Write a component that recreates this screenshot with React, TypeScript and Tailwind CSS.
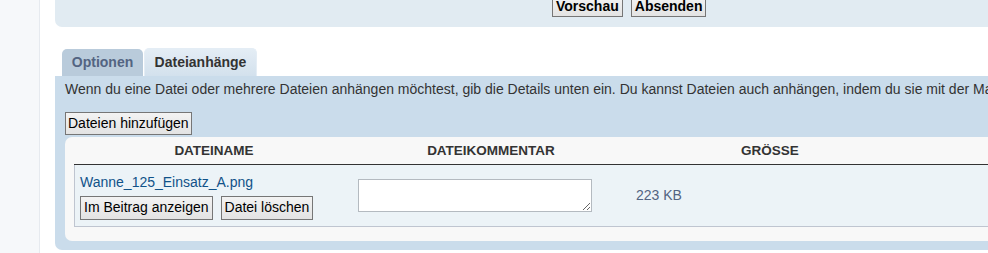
import React from "react";

const font = { fontFamily: '"Liberation Sans", Arial, sans-serif' };

function Btn({ children, bold = false, className = "" }: { children: React.ReactNode; bold?: boolean; className?: string }) {
  return (
    <button
      className={
        "shrink-0 border border-[#767676] bg-gradient-to-b from-[#f3f3f3] to-[#e3e3e3] text-[14px] leading-[19px] text-black " +
        (bold ? "font-bold " : "") +
        className
      }
    >
      {children}
    </button>
  );
}

export default function App() {
  return (
    <div className="flex h-[253px] w-[988px] overflow-hidden bg-white" style={font}>
      <div className="h-full w-[40px] shrink-0 border-r border-[#e6eaef] bg-[#f6f8fa]" />
      <div className="min-w-0 flex-1 overflow-hidden pl-[15px]">
        <div className="w-[1100px]">
          {/* top panel */}
          <div className="flex h-[27px] items-start gap-[8px] rounded-b-[7px] bg-[#e1ebf2] pl-[497px]">
            <Btn bold className="-mt-[4px] h-[21px] px-[3px]">Vorschau</Btn>
            <Btn bold className="-mt-[4px] h-[21px] px-[3px]">Absenden</Btn>
          </div>

          {/* tabs */}
          <div className="mt-[21px] flex items-end gap-[1px] pl-[7px]">
            <div className="flex h-[27px] w-[81px] items-center justify-center rounded-t-[5px] bg-[#b9cbdb] text-[14px] font-bold text-[#536482]">
              Optionen
            </div>
            <div className="flex h-[28px] w-[113px] items-center justify-center rounded-t-[5px] border border-b-0 border-[#e4edf5] bg-gradient-to-b from-[#e4edf5] to-[#d3e1ed] text-[14px] font-bold text-[#333333]">
              Dateianhänge
            </div>
          </div>

          {/* panel */}
          <div className="h-[174px] rounded-[7px] rounded-tl-none bg-[#cadceb] px-[10px] pt-[5px]">
            <p className="whitespace-nowrap text-[14px] leading-[17px] text-[#333333]">
              Wenn du eine Datei oder mehrere Dateien anhängen möchtest, gib die Details unten ein. Du kannst Dateien auch anhängen, indem du sie mit der Maus in das Nachrichtenfeld ziehst.
            </p>
            <div className="mt-[14px] flex">
              <Btn className="h-[23px] px-[2px]">Dateien hinzufügen</Btn>
            </div>

            <div className="mt-[2px] rounded-[7px] bg-[#f8f8f8] pb-[14px] pl-[9px]">
              {/* header */}
              <div className="flex h-[28px] items-end border-b border-[#333333] pb-[5px] text-[13.5px] font-bold leading-[16px] text-[#333333]">
                <div className="w-[280px] text-center">DATEINAME</div>
                <div className="w-[274px] text-center">DATEIKOMMENTAR</div>
                <div className="w-[284px] text-center">GRÖSSE</div>
                <div className="flex-1" />
              </div>
              {/* row */}
              <div className="flex h-[62px] items-center border-b border-l border-[#bfc5d0] bg-[#ecf3f7]">
                <div className="flex w-[279px] flex-col items-start pl-[5px] pt-[2px]">
                  <span className="text-[14px] leading-[17px] text-[#105289]">Wanne_125_Einsatz_A.png</span>
                  <div className="mt-[5px] flex gap-[8px]">
                    <Btn className="h-[24px] px-[3px]">Im Beitrag anzeigen</Btn>
                    <Btn className="h-[24px] px-[3px]">Datei löschen</Btn>
                  </div>
                </div>
                <div className="w-[274px] pl-[4px]">
                  <textarea
                    className="block h-[33px] w-[234px] border border-[#b4bac0] bg-white text-[13px]"
                    defaultValue=""
                  />
                </div>
                <div className="w-[284px] pl-[8px] text-[14px] leading-[17px] text-[#536482]">223 KB</div>
                <div className="flex-1" />
              </div>
            </div>
          </div>
        </div>
      </div>
    </div>
  );
}
